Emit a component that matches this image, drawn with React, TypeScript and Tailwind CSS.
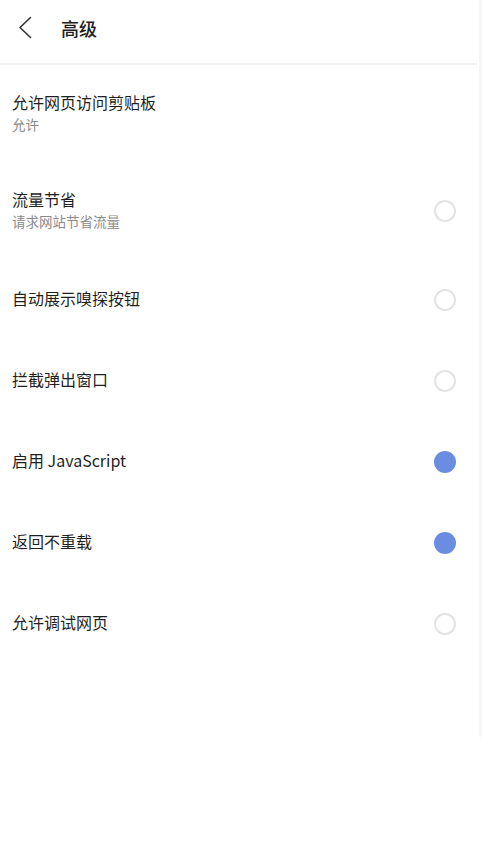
import React from "react";

type Item = { title: string; sub?: string; toggle?: boolean; on?: boolean };

const items: Item[] = [
  { title: "允许网页访问剪贴板", sub: "允许" },
  { title: "流量节省", sub: "请求网站节省流量", toggle: true, on: false },
  { title: "自动展示嗅探按钮", toggle: true, on: false },
  { title: "拦截弹出窗口", toggle: true, on: false },
  { title: "启用 JavaScript", toggle: true, on: true },
  { title: "返回不重载", toggle: true, on: true },
  { title: "允许调试网页", toggle: true, on: false },
];

function Radio({ on }: { on?: boolean }) {
  return on ? (
    <div className="w-[22px] h-[22px] rounded-full bg-[#6a8de2]" />
  ) : (
    <div className="w-[22px] h-[22px] rounded-full border-2 border-[#e3e3e3] bg-white" />
  );
}

export default function App() {
  return (
    <div
      className="w-[482px] h-[849px] bg-white flex overflow-hidden"
      style={{ fontFamily: '"Noto Sans CJK SC", "Noto Sans", Roboto, sans-serif' }}
    >
      <div className="w-[477px] flex flex-col">
        <div className="h-[63px] flex items-start">
          <div className="w-[61px] flex pl-[18px] pt-[16px]">
            <svg width="14" height="23" viewBox="0 0 14 23" fill="none">
              <path d="M12.5 1.5L2 11.5L12.5 21.5" stroke="#333" strokeWidth="1.6" strokeLinecap="round" strokeLinejoin="round" />
            </svg>
          </div>
          <div className="text-[18px] font-medium text-[#222] leading-[24px] pt-[16px]">高级</div>
        </div>
        <div className="h-[2px] bg-[#f2f2f2]" />
        <div className="pt-[2px] flex flex-col">
          {items.map((it, i) => (
            <div
              key={i}
              className={`flex items-center justify-between pl-[12px] pr-[21px] ${it.sub ? "h-[96px]" : "h-[81px]"}`}
            >
              <div className={`relative flex flex-col ${it.toggle ? "-top-[2px]" : "-top-[3px]"}`}>
                <div className="text-[16px] leading-[22px] text-[#1f1f1f]">{it.title}</div>
                {it.sub && (
                  <div className="text-[13.5px] leading-[18px] mt-[2px] text-[#8a8a8a]">{it.sub}</div>
                )}
              </div>
              {it.toggle && <Radio on={it.on} />}
            </div>
          ))}
        </div>
      </div>
      <div className="w-[2px]" />
      <div className="w-[3px] h-[737px] bg-[#f6f6f6]" />
    </div>
  );
}
